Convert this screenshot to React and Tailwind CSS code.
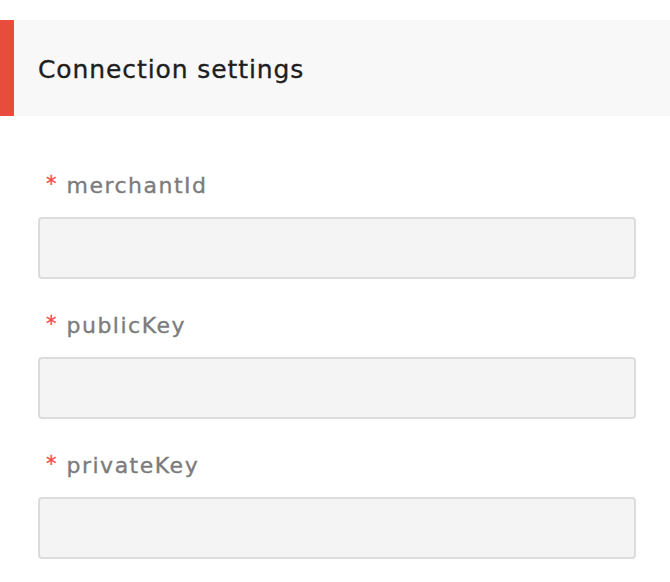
export default function App() {
  const fields = ["merchantId", "publicKey", "privateKey"];
  return (
    <div className="w-[670px] h-[582px] bg-white overflow-hidden" style={{ fontFamily: '"DejaVu Sans", sans-serif' }}>
      <div className="mt-[20px] h-[96px] flex bg-[#f8f8f8]">
        <div className="w-[14px] bg-[#e84c3d]" />
        <div className="flex items-center pl-[24px] pt-[3px] text-[25px] text-[#1e1e1e] tracking-[0.9px] [-webkit-text-stroke:0.35px]">
          Connection settings
        </div>
      </div>
      <div className="pt-[54px] pl-[38px] pr-[34px]">
        {fields.map((f) => (
          <div key={f} className="mb-[31px]">
            <div className="h-[30px] flex items-center pl-[8px] text-[22px] text-[#7c7c7c]">
              <span className="text-[#f44a45] mr-[10px] text-[21px] [-webkit-text-stroke:0.3px]">*</span>
              <span className="tracking-[1.5px] [-webkit-text-stroke:0.35px]">{f}</span>
            </div>
            <div className="mt-[17px] h-[62px] rounded-[4px] border-2 border-[#dcdcdc] bg-[#f4f4f4]" />
          </div>
        ))}
      </div>
    </div>
  );
}
